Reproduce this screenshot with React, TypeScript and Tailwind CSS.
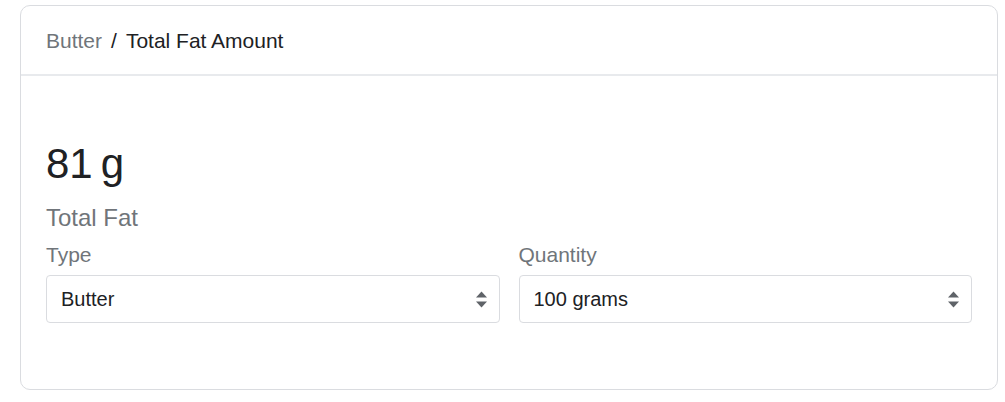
import React from 'react';

const Chevrons = () => (
  <svg width="11" height="17" viewBox="0 0 11 17" className="shrink-0">
    <path d="M5.5 0.5 L11 6.5 H0 Z" fill="#5f6368" />
    <path d="M5.5 16.5 L11 10.5 H0 Z" fill="#5f6368" />
  </svg>
);

const SelectBox = ({ label, value }: { label: string; value: string }) => (
  <div className="flex flex-col flex-1 min-w-0">
    <span className="text-[21px] leading-[24px] text-[#70757a] mb-[8px]">{label}</span>
    <div className="h-[48px] border border-[#dadce0] rounded-[4px] flex items-center justify-between pl-[14px] pr-[12px]">
      <span className="text-[20px] text-[#202124]">{value}</span>
      <Chevrons />
    </div>
  </div>
);

export default function App() {
  return (
    <div
      className="w-[1005px] h-[402px] bg-white pt-[5px] pl-[20px] pr-[8px]"
      style={{ fontFamily: '"Liberation Sans", Arial, sans-serif' }}
    >
      <div className="w-[978px] h-[385px] border border-[#dadce0] rounded-[10px] flex flex-col">
        {/* Breadcrumb header */}
        <div className="h-[70px] shrink-0 flex items-center px-[25px] pt-[2px] border-b-2 border-[#e8eaed] text-[21px]">
          <span className="text-[#70757a]">Butter</span>
          <span className="text-[#202124] mx-[9px]">/</span>
          <span className="text-[#202124]">Total Fat Amount</span>
        </div>

        <div className="px-[25px] pt-[67px] flex flex-col">
          <div className="text-[42px] leading-[42px] text-[#202124] flex">
            <span>81</span>
            <span className="ml-[8px]">g</span>
          </div>
          <div className="text-[24px] leading-[28px] text-[#70757a] mt-[19px]">Total Fat</div>
          <div className="flex gap-[19px] mt-[11px]">
            <SelectBox label="Type" value="Butter" />
            <SelectBox label="Quantity" value="100 grams" />
          </div>
        </div>
      </div>
    </div>
  );
}
